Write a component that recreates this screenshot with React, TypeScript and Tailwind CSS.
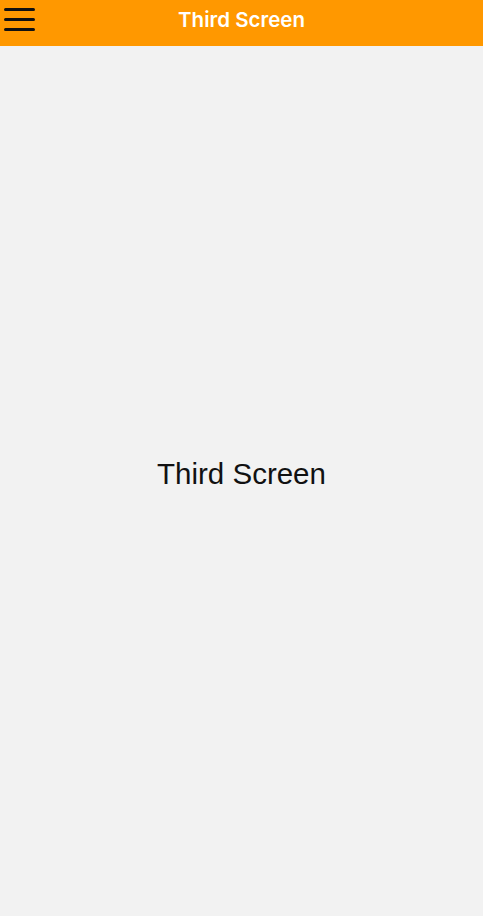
export default function App() {
  return (
    <div className="flex h-[916px] w-[483px] flex-col bg-[#f2f2f2]" style={{ fontFamily: '"Liberation Sans", Arial, sans-serif' }}>
      <div className="relative flex h-[46px] shrink-0 items-center justify-center bg-[#ff9800] pb-[5px]">
        <div className="absolute left-[4px] top-[8px] flex w-[31px] flex-col gap-[7px]">
          <div className="h-[3px] rounded-full bg-[#111]" />
          <div className="h-[3px] rounded-full bg-[#111]" />
          <div className="h-[3px] rounded-full bg-[#111]" />
        </div>
        <span className="font-['Inter',sans-serif] text-[20.5px] font-semibold text-white">Third Screen</span>
      </div>
      <div className="flex flex-1 items-center justify-center pb-[14px]">
        <span className="text-[29.5px] text-[#111]">Third Screen</span>
      </div>
    </div>
  );
}
